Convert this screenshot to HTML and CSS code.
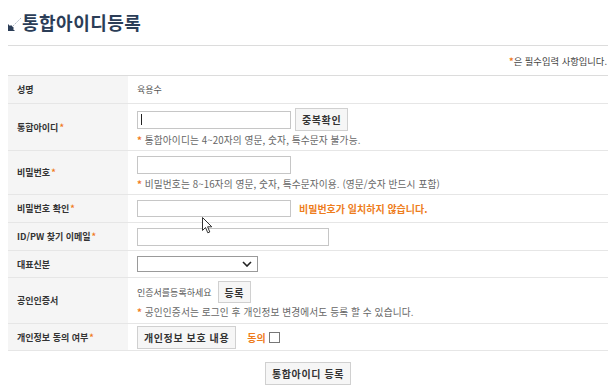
FILE: index.html
```html
<!DOCTYPE html>
<html lang="ko">
  <head>
    <meta charset="UTF-8" />
    <title>통합아이디등록</title>
    <link rel="stylesheet" href="styles.css">
  </head>
  <body>
    <div class="page">
      <h1 class="title">
        <svg class="title-icon" width="14" height="14" viewBox="0 0 14 14">
          <line x1="5" y1="9" x2="13" y2="1" stroke="#a9b4c2" stroke-width="1" stroke-dasharray="1.5 1" />
          <polygon points="0,7 0,14 7,14 5,12 6,11 3,8 2,9" fill="#2b3d57" />
        </svg>
        통합아이디등록
      </h1>
      <p class="req-note"><span class="req">*</span>은 필수입력 사항입니다.</p>

      <div class="form">
        <div class="row r28">
          <div class="label">성명</div>
          <div class="field">육용수</div>
        </div>
        <div class="row r47">
          <div class="label">통합아이디<span class="req">*</span></div>
          <div class="field stack pt4">
            <div class="line">
              <input type="text" class="input w154 caret">
              <button class="btn">중복확인</button>
            </div>
            <p class="hint"><span class="req">*</span> 통합아이디는 4~20자의 영문, 숫자, 특수문자 불가능.</p>
          </div>
        </div>
        <div class="row r44">
          <div class="label">비밀번호<span class="req">*</span></div>
          <div class="field stack pt5">
            <input type="password" class="input w154">
            <p class="hint"><span class="req">*</span> 비밀번호는 8~16자의 영문, 숫자, 특수문자이용. (영문/숫자 반드시 포함)</p>
          </div>
        </div>
        <div class="row r28">
          <div class="label">비밀번호 확인<span class="req">*</span></div>
          <div class="field">
            <input type="password" class="input w154 short">
            <span class="error">비밀번호가 일치하지 않습니다.</span>
          </div>
        </div>
        <div class="row r28">
          <div class="label">ID/PW 찾기 이메일<span class="req">*</span></div>
          <div class="field">
            <input type="text" class="input w192">
          </div>
        </div>
        <div class="row r27">
          <div class="label">대표신분</div>
          <div class="field">
            <select class="select"><option></option></select>
          </div>
        </div>
        <div class="row r46">
          <div class="label">공인인증서</div>
          <div class="field stack pt3">
            <div class="line wide">
              <span>인증서를등록하세요</span>
              <button class="btn small">등록</button>
            </div>
            <p class="hint"><span class="req">*</span> 공인인증서는 로그인 후 개인정보 변경에서도 등록 할 수 있습니다.</p>
          </div>
        </div>
        <div class="row r27">
          <div class="label">개인정보 동의 여부<span class="req">*</span></div>
          <div class="field">
            <button class="btn">개인정보 보호 내용</button>
            <label class="agree">동의 <input type="checkbox" class="check"></label>
          </div>
        </div>
      </div>

      <div class="submit-area">
        <button class="btn">통합아이디 등록</button>
      </div>
    </div>

    <svg class="pointer" width="11" height="17" viewBox="0 0 11 17">
      <path d="M0.5,0.5 L0.5,13.5 L3.5,10.5 L5.8,15.8 L7.8,15 L5.6,9.8 L9.8,9.8 Z" fill="#fff" stroke="#333" stroke-width="1" stroke-linejoin="round" />
    </svg>
  </body>
</html>
```

FILE: styles.css
```css
* {
  box-sizing: border-box;
  margin: 0;
  padding: 0;
}

body {
  position: relative;
  background-color: #fff;
  font-family: "Noto Sans CJK KR", "Noto Sans", sans-serif;
  color: #333;
  overflow: hidden;
}

.page {
  width: 600px;
  margin-left: 8px;
}

.title {
  display: flex;
  align-items: flex-start;
  height: 46px;
  padding-top: 10px;
  border-bottom: 1px solid #dcdcdc;
  font-size: 18px;
  line-height: 25px;
  font-weight: bold;
  color: #2b3d57;
  letter-spacing: 0.5px;
}

.title-icon {
  margin-top: 7px;
  flex: none;
}

.req-note {
  margin: 8px 1px 7px 0;
  font-size: 9.3px;
  line-height: 14px;
  text-align: right;
  color: #444;
}

.req {
  color: #f07a1e;
  font-weight: bold;
}

.form {
  border-top: 1px solid #dcdcdc;
}

.row {
  display: grid;
  grid-template-columns: 120px 1fr;
  border-bottom: 1px solid #e6e6e6;
}

.r27 { height: 27px; }
.r28 { height: 28px; }
.r44 { height: 44px; }
.r46 { height: 46px; }
.r47 { height: 47px; }

.label {
  display: flex;
  align-items: center;
  padding-left: 9px;
  background-color: #f5f5f5;
  font-size: 9px;
  font-weight: bold;
  color: #333;
}

.label .req {
  margin-left: 1px;
}

.field {
  display: flex;
  align-items: center;
  padding: 0 9px;
  font-size: 9px;
  color: #555;
}

.field.stack {
  flex-direction: column;
  align-items: flex-start;
  gap: 3px;
}

.pt3 { padding-top: 3px; }
.pt4 { padding-top: 4px; }
.pt5 { padding-top: 5px; gap: 4px !important; }

.line {
  display: flex;
  align-items: center;
  gap: 4px;
}

.line.wide {
  gap: 6px;
}

.hint {
  font-size: 9.7px;
  line-height: 13px;
  letter-spacing: 0.1px;
  color: #666;
}

.input {
  height: 18px;
  border: 1px solid #c6c6c6;
  background-color: #fff;
  font-family: inherit;
  font-size: 10px;
  outline: none;
}

.input.short {
  height: 17px;
}

.w154 { width: 154px; }
.w192 { width: 192px; }

.caret {
  background: linear-gradient(#222, #222) no-repeat 3px 50% / 1px 11px;
}

.error {
  margin-left: 8px;
  font-size: 10px;
  font-weight: bold;
  color: #ee7d1c;
}

.select {
  width: 121px;
  height: 16px;
  border: 1px solid #9a9a9a;
  background: #fff url("data:image/svg+xml,%3Csvg xmlns='http://www.w3.org/2000/svg' width='10' height='6' viewBox='0 0 10 6'%3E%3Cpath d='M1 1l4 4 4-4' fill='none' stroke='%23222' stroke-width='1.6'/%3E%3C/svg%3E") no-repeat right 5px center;
  appearance: none;
  -webkit-appearance: none;
  border-radius: 0;
  font-size: 9px;
  font-family: inherit;
  outline: none;
}

.btn {
  height: 23px;
  padding: 0 6px;
  border: 1px solid #d0d0d0;
  border-radius: 0;
  background-color: #f6f6f6;
  font-family: inherit;
  font-size: 10px;
  font-weight: bold;
  letter-spacing: 0.6px;
  color: #333;
  cursor: pointer;
}

.btn.small {
  height: 22px;
}

.agree {
  display: flex;
  align-items: center;
  gap: 3px;
  margin-left: 11px;
  font-size: 10px;
  font-weight: bold;
  color: #ee7d1c;
}

.check {
  width: 11px;
  height: 11px;
  border: 1px solid #777;
  background-color: #fff;
  appearance: none;
  -webkit-appearance: none;
}

.submit-area {
  display: flex;
  justify-content: center;
  margin-top: 11px;
}

.pointer {
  position: absolute;
  left: 202px;
  top: 217px;
}
```
